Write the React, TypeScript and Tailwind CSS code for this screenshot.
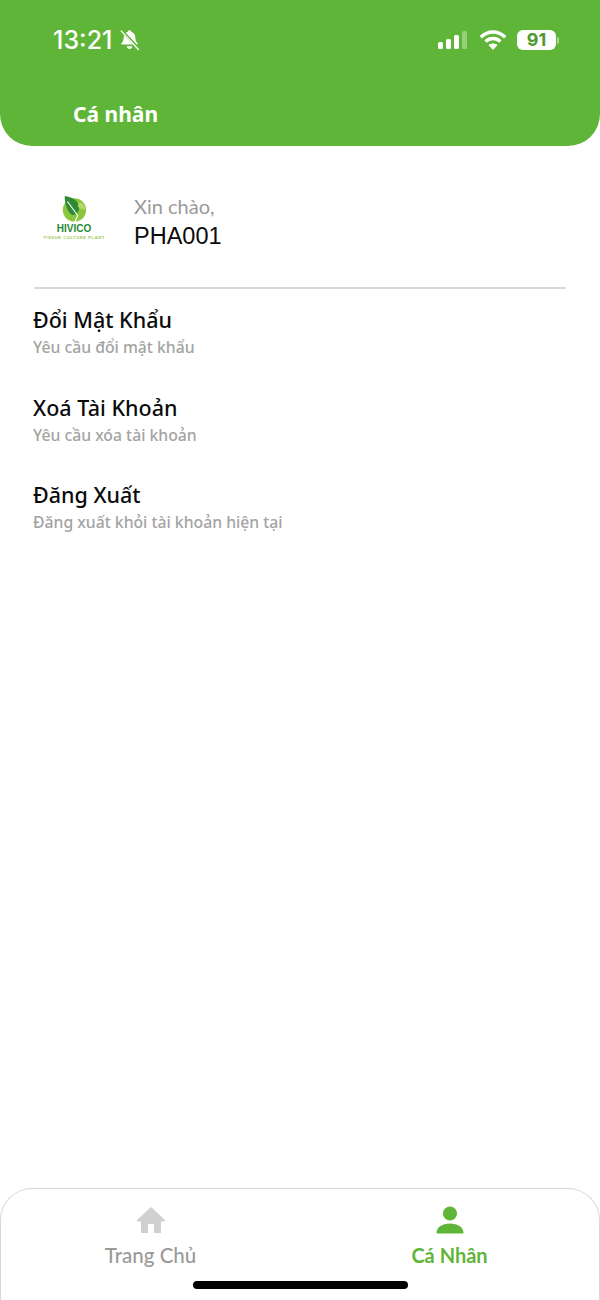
const GREEN = '#5fb538'

function BellOff() {
  return (
    <svg width="21" height="22" viewBox="0 0 20 21" fill="none">
      <path d="M10 1.200c.9 0 1.500.6 1.600 1.400 2.600.7 3.900 2.900 4 5.600.1 2.400.5 3.900 2.100 5.300.5.500.1 1.300-.6 1.300H2.900c-.7 0-1.100-.8-.6-1.300 1.600-1.400 2-2.900 2.100-5.300.1-2.700 1.400-4.900 4-5.600.1-.8.700-1.400 1.600-1.400z" fill="#fff" />
      <path d="M7.300 16.500h5.400c-.2 1.500-1.300 2.500-2.700 2.500s-2.500-1-2.700-2.500z" fill="#fff" />
      <path d="M3 2.200L18 18" stroke={GREEN} strokeWidth="2.800" />
      <path d="M2 1.800L18.500 19.500" stroke="#fff" strokeWidth="1.300" strokeLinecap="round" />
    </svg>
  )
}

function StatusIcons() {
  return (
    <div className="flex items-center">
      <svg width="30" height="20" viewBox="0 0 30 20" className="mr-[11px]">
        <rect x="0" y="12" width="5" height="7" rx="1.500" fill="#fff" />
        <rect x="8" y="9" width="5" height="10" rx="1.500" fill="#fff" />
        <rect x="16" y="5" width="5" height="14" rx="1.500" fill="#fff" />
        <rect x="24" y="1" width="5" height="18" rx="1.500" fill="#fff" fillOpacity="0.35" />
      </svg>
      <svg width="28" height="20" viewBox="0 0 28 20" fill="none" className="mr-[10px]">
        <path d="M1.800 7.200C9 .2 19 .2 26.200 7.200" stroke="#fff" strokeWidth="3.400" />
        <path d="M6.500 11.500c4.300-4 10.700-4 15 0" stroke="#fff" strokeWidth="3.400" />
        <path d="M14 20l-4.500-5c2.600-2 6.400-2 9 0L14 20z" fill="#fff" />
      </svg>
      <div className="relative mr-[1px] flex h-[20px] w-[39px] items-center justify-center rounded-[6px] bg-white">
        <span className="font-['Inter',sans-serif] text-[18px] leading-none font-bold text-[#4f9a2e]">91</span>
      </div>
      <div className="h-[7px] w-[2px] rounded-r-full bg-white/50" />
    </div>
  )
}

function HivicoLogo() {
  return (
    <div className="flex w-[64px] flex-col items-center pt-[1px]">
      <svg width="28" height="28" viewBox="0 0 30 30">
        <circle cx="15.500" cy="16" r="12.500" fill="#8cc63f" />
        <path d="M5 1c8 1 15 5 15.500 12 .4 5-3 8-7.500 8.500C8 18 5 10 5 1z" fill="#2e8b34" />
        <path d="M20 8c4 0 7 3 7 7-3 1-6-.5-8-3l1-4z" fill="#b4d96b" />
        <path d="M8 7l11 15M19 22l-3 7" stroke="#fff" strokeWidth="1.200" fill="none" />
      </svg>
      <span className="mt-[1px] font-['Liberation_Sans',sans-serif] text-[10px] leading-[10px] font-bold text-[#1f8a36]">HIVICO</span>
      <span className="mt-[2px] font-['Liberation_Sans',sans-serif] text-[4px] leading-[4px] font-bold tracking-[0.16em] whitespace-nowrap text-[#9dc54a]">TISSUE CULTURE PLANT</span>
    </div>
  )
}

function MenuItem({ title, sub }: { title: string; sub: string }) {
  return (
    <div className="h-[87.500px]">
      <div className="text-[21.500px] leading-[28px] font-medium text-[#0b0b0b]">{title}</div>
      <div className="mt-[3px] text-[15.750px] leading-[20px] font-medium text-[#a3a3a3]">{sub}</div>
    </div>
  )
}

export default function App() {
  return (
    <div className="relative flex min-h-[1300px] w-[600px] flex-col bg-white font-['Noto_Sans',sans-serif]">
      <header className="h-[146px] rounded-b-[32px] bg-[#5fb538] pt-[24px] pr-[41px] pl-[53px]">
        <div className="flex h-[32px] items-center justify-between">
          <div className="flex items-center gap-[7px]">
            <span className="font-['Inter',sans-serif] text-[25px] leading-none font-medium text-white">13:21</span>
            <BellOff />
          </div>
          <StatusIcons />
        </div>
        <h1 className="mt-[44px] ml-[20px] text-[21px] leading-[28px] font-bold text-white">Cá nhân</h1>
      </header>

      <main className="flex-1 px-[34px]">
        <div className="flex h-[143px] items-center border-b-2 border-[#d9d9d9]">
          <div className="ml-[8px]">
            <HivicoLogo />
          </div>
          <div className="ml-[28px] pt-[9px]">
            <div className="font-['Lato',sans-serif] text-[20px] leading-[26px] text-[#9a9a9a]">Xin chào,</div>
            <div className="mt-[3px] font-['Liberation_Sans',sans-serif] text-[23.500px] leading-[28px] text-[#0b0b0b]">PHA001</div>
          </div>
        </div>
        <div className="-ml-px pt-[17px]">
          <MenuItem title="Đổi Mật Khẩu" sub="Yêu cầu đổi mật khẩu" />
          <MenuItem title="Xoá Tài Khoản" sub="Yêu cầu xóa tài khoản" />
          <MenuItem title="Đăng Xuất" sub="Đăng xuất khỏi tài khoản hiện tại" />
        </div>
      </main>

      <nav className="flex h-[112px] rounded-t-[32px] border-x border-t border-[#d8d8d8] pt-[17px]">
        <div className="flex flex-1 flex-col items-center">
          <svg width="30" height="28" viewBox="0 0 30 28" fill="#d0d0d0">
            <path d="M15 1L.500 14.500 2 15.500h3V27h7v-9h6v9h7V15.500h3l1.500-1z" />
          </svg>
          <span className="mt-[8px] font-['Lato',sans-serif] text-[20.500px] leading-[26px] font-medium text-[#9a9a9a]">Trang Chủ</span>
        </div>
        <div className="flex flex-1 flex-col items-center">
          <svg width="28" height="28" viewBox="0 0 28 28" fill={GREEN}>
            <circle cx="14" cy="7.500" r="7" />
            <path d="M1.500 27.500c-.5 0-1-.4-1-1C1 21 6 17.500 14 17.500S27 21 27.500 26.500c0 .6-.5 1-1 1z" />
          </svg>
          <span className="mt-[8px] font-['Lato',sans-serif] text-[20px] leading-[26px] font-bold text-[#5fb538]">Cá Nhân</span>
        </div>
      </nav>

      {/* home indicator sits over the tab bar */}
      <div className="absolute top-[1281px] left-[193px] h-[8px] w-[215px] rounded-full bg-black" />
    </div>
  )
}
